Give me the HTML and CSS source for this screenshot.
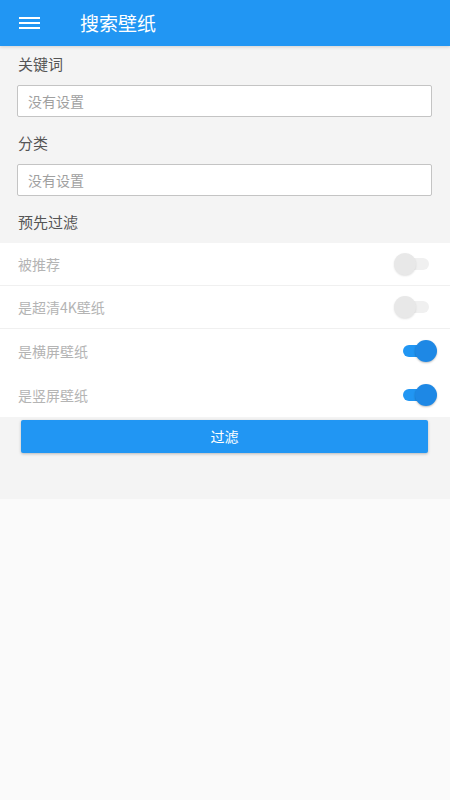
FILE: index.html
```html
<!DOCTYPE html>
<html lang="zh-CN">
<head>
    <meta charset="UTF-8">
    <meta name="viewport" content="width=device-width, initial-scale=1.0">
    <title>搜索壁纸</title>
    <link rel="stylesheet" href="styles.css">
</head>
<body>
    <div class="toolbar">
        <div class="menu-icon">
            <span></span>
            <span></span>
            <span></span>
        </div>
        <div class="toolbar-title">搜索壁纸</div>
    </div>

    <div class="search-panel">
        <div class="form-section">
            <div class="label">关键词</div>
            <div class="input-box">没有设置</div>

            <div class="label">分类</div>
            <div class="input-box">没有设置</div>

            <div class="label">预先过滤</div>
        </div>

        <div class="filter-list">
            <div class="filter-row divided">
                <span class="filter-name">被推荐</span>
                <div class="switch"><div class="thumb"></div></div>
            </div>
            <div class="filter-row divided">
                <span class="filter-name">是超清4K壁纸</span>
                <div class="switch"><div class="thumb"></div></div>
            </div>
            <div class="filter-row">
                <span class="filter-name">是横屏壁纸</span>
                <div class="switch on"><div class="thumb"></div></div>
            </div>
            <div class="filter-row">
                <span class="filter-name">是竖屏壁纸</span>
                <div class="switch on"><div class="thumb"></div></div>
            </div>
        </div>

        <div class="button-wrap">
            <div class="filter-button">过滤</div>
        </div>
    </div>
</body>
</html>
```

FILE: styles.css
```css
body {
    margin: 0;
    font-family: "Noto Sans CJK SC", "Noto Sans", sans-serif;
    background-color: #fafafa;
    width: 450px;
    min-height: 800px;
}
.toolbar {
    height: 46px;
    background-color: #2196f3;
    display: flex;
    align-items: center;
    box-shadow: 0 1px 3px rgba(0,0,0,0.15);
    position: relative;
}
.menu-icon {
    width: 21px;
    margin-left: 19px;
    display: flex;
    flex-direction: column;
    gap: 3px;
}
.menu-icon span {
    display: block;
    height: 2px;
    background-color: white;
}
.toolbar-title {
    margin-left: 40px;
    color: white;
    font-size: 19px;
    line-height: 46px;
}
.search-panel {
    background-color: #f4f4f4;
    padding-bottom: 46px;
}
.form-section {
    padding: 6px 18px 0 17px;
}
.label {
    font-size: 15px;
    color: #555;
    line-height: 24px;
    margin-left: 1px;
    margin-bottom: 9px;
}
.input-box {
    height: 30px;
    background-color: white;
    border: 1px solid #c4c4c4;
    border-radius: 2px;
    font-size: 14px;
    color: #a0a0a0;
    line-height: 30px;
    padding-left: 10px;
    margin-bottom: 14px;
}
.filter-list {
    background-color: white;
    margin-top: 8px;
}
.filter-row {
    height: 44px;
    display: flex;
    align-items: center;
    justify-content: space-between;
    padding-left: 18px;
}
.filter-row.divided {
    border-bottom: 1px solid #f0f0f0;
    height: 42px;
}
.filter-name {
    font-size: 14px;
    color: #b4b4b4;
}
.switch {
    position: relative;
    width: 25px;
    height: 12px;
    margin-right: 21px;
    background-color: #f0f0f0;
    border-radius: 6px;
}
.switch .thumb {
    position: absolute;
    top: -5px;
    left: -10px;
    width: 22px;
    height: 22px;
    border-radius: 50%;
    background-color: #e8e8e8;
    box-shadow: 0 1px 2px rgba(0,0,0,0.12);
}
.switch.on {
    left: -1px;
    background-color: #2196f3;
}
.switch.on .thumb {
    left: 12px;
    background-color: #1e88e5;
    box-shadow: 0 1px 2px rgba(0,0,0,0.25);
}
.button-wrap {
    padding: 3px 22px 0 21px;
}
.filter-button {
    height: 33px;
    background-color: #2196f3;
    color: white;
    font-size: 14px;
    text-align: center;
    line-height: 33px;
    border-radius: 2px;
    box-shadow: 0 1px 3px rgba(0,0,0,0.25);
}
```
